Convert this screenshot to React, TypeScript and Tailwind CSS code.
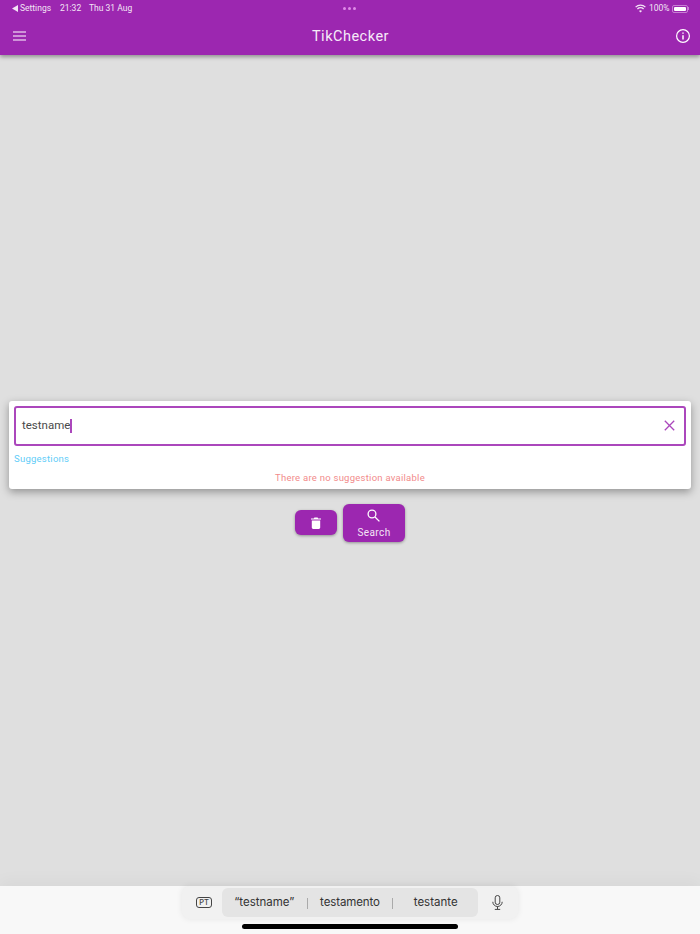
const font = "[font-family:Roboto,'Liberation_Sans',sans-serif]";

function StatusBar() {
  return (
    <div className="relative flex h-[16px] items-center justify-between pl-[12px] pr-[11px] pt-[1px] text-[8.5px] leading-none tracking-[0px] text-[#f3e5f5] [font-family:Roboto,sans-serif]">
      <div className="flex items-center">
        <svg width="6" height="7" viewBox="0 0 6 7" fill="currentColor" className="mr-[2px]">
          <path d="M0 3.5 6 0v7z" />
        </svg>
        <span className="w-[32px]">Settings</span>
        <span className="ml-[8px] w-[22px]">21:32</span>
        <span className="ml-[7px]">Thu 31 Aug</span>
      </div>
      <div className="absolute left-[343px] top-[7px] flex gap-[2px]">
        <span className="h-[3px] w-[3px] rounded-full bg-[#e08be8]" />
        <span className="h-[3px] w-[3px] rounded-full bg-[#e08be8]" />
        <span className="h-[3px] w-[3px] rounded-full bg-[#e08be8]" />
      </div>
      <div className="flex items-center">
        <svg width="11" height="9" viewBox="0 0 11 9" fill="none" stroke="currentColor" strokeWidth="1.3" className="mr-[3px]">
          <path d="M.6 3.1a7 7 0 0 1 9.8 0" />
          <path d="M2.4 5a4.4 4.4 0 0 1 6.2 0" />
          <path d="M5.5 8.6 4 6.9a2.2 2.2 0 0 1 3 0z" fill="currentColor" stroke="none" />
        </svg>
        <span>100%</span>
        <div className="ml-[2px] flex items-center">
          <div className="flex h-[8px] w-[16px] items-center rounded-[2px] border border-[#c77fd4] p-[1px]">
            <div className="h-full w-full rounded-[1px] bg-white" />
          </div>
          <div className="ml-[0.5px] h-[3px] w-[1px] bg-[#c77fd4]" />
        </div>
      </div>
    </div>
  );
}

function AppBar() {
  return (
    <header className="z-10 h-[55px] shrink-0 bg-[#9c27b0] shadow-[0_2px_4px_rgba(0,0,0,0.35)]">
      <StatusBar />
      <div className="flex h-[39px] items-center justify-between pl-[13px] pr-[9px]">
        <svg width="13" height="10" viewBox="0 0 13 10" fill="none" stroke="white" strokeWidth="1.2">
          <path d="M0 1h13M0 5h13M0 9h13" />
        </svg>
        <h1 className="mt-[2px] text-[14.5px] font-normal tracking-[0.5px] text-[#f6ebf8]">TikChecker</h1>
        <svg width="16" height="16" viewBox="0 0 16 16" fill="none" stroke="white" strokeWidth="1.2">
          <circle cx="8" cy="8" r="6.4" />
          <path d="M8 7.2v4.2" strokeWidth="1.5" />
          <path d="M8 4.4v1.4" strokeWidth="1.5" />
        </svg>
      </div>
    </header>
  );
}

function SearchCard() {
  return (
    <div className="w-[682px] rounded-[3px] bg-white px-[5px] pt-[5px] shadow-[0_3px_8px_rgba(0,0,0,0.35)]">
      <div className="flex h-[40px] items-center justify-between rounded-[3px] border-2 border-[#ab47bc] pl-[6px] pr-[9px]">
        <div className="flex items-center text-[11.5px] text-[#4a4a4a]">
          testname
          <span className="h-[14px] w-[1.5px] bg-[#ab47bc]" />
        </div>
        <svg width="11" height="11" viewBox="0 0 11 11" fill="none" stroke="#ab47bc" strokeWidth="1.3">
          <path d="M.8.8l9.4 9.4M10.2.8.8 10.2" />
        </svg>
      </div>
      <p className="mt-[6px] text-[9.5px] leading-[14px] tracking-[0.25px] text-[#5fcdf8]">Suggestions</p>
      <p className="mt-[5px] pb-[4px] text-center text-[9.5px] leading-[14px] tracking-[0.25px] text-[#f28b8b]">
        There are no suggestion available
      </p>
    </div>
  );
}

function Buttons() {
  return (
    <div className="mt-[15px] flex items-center gap-[6px]">
      <button className="flex h-[25px] w-[42px] items-center justify-center rounded-[6px] bg-[#9c27b0] shadow-[0_1px_3px_rgba(0,0,0,0.35)]">
        <svg width="10" height="12" viewBox="0 0 10 12" fill="white">
          <path d="M0 1.4h2.8L3.4.6h3.2l.6.8H10v1.2H0zM.8 3.4h8.4v7.2c0 .8-.6 1.4-1.4 1.4H2.2C1.4 12 .8 11.4.8 10.6z" />
        </svg>
      </button>
      <button className="flex h-[38px] w-[62px] flex-col items-center justify-start rounded-[6px] bg-[#9c27b0] pt-[5px] text-[#f3e5f5] shadow-[0_1px_3px_rgba(0,0,0,0.35)]">
        <svg width="13" height="13" viewBox="0 0 13 13" fill="none" stroke="white" strokeWidth="1.3" className="-ml-[1px] mb-[5px]">
          <circle cx="5" cy="5" r="3.9" />
          <path d="M8 8l4.4 4.4" />
        </svg>
        <span className="text-[10px] font-normal leading-[12px] tracking-[0.4px]">Search</span>
      </button>
    </div>
  );
}

function Keyboard() {
  return (
    <footer className="relative flex h-[48px] shrink-0 justify-center bg-[#f8f8f8] shadow-[0_-6px_14px_rgba(0,0,0,0.03)] [font-family:Inter,sans-serif]">
      <div className="flex h-[33px] w-[336px] items-center rounded-[8px] bg-[#f1f1f1] shadow-[0_0_6px_rgba(0,0,0,0.08)]">
        <div className="flex w-[40px] justify-end pr-[10px]">
          <span className="flex h-[11px] w-[16px] items-center justify-center rounded-[3px] border-[1.5px] border-[#444] text-[7.5px] font-medium leading-none text-[#444]">
            PT
          </span>
        </div>
        <div className="flex h-[29px] w-[256px] items-center rounded-[6px] bg-[#e4e4e4] pt-[1px] text-[11.5px] text-[#333]">
          <span className="flex-[85] text-center">“testname”</span>
          <span className="h-[11px] w-[1px] bg-[#aaa]" />
          <span className="flex-[85] text-center tracking-[-0.1px]">testamento</span>
          <span className="h-[11px] w-[1px] bg-[#aaa]" />
          <span className="flex-[85] text-center">testante</span>
        </div>
        <div className="flex flex-1 justify-center pr-[2px]">
          <svg width="11" height="15" viewBox="0 0 11 15" fill="none" stroke="#444" strokeWidth="1">
            <rect x="3.2" y="0.5" width="4.6" height="9" rx="2.3" />
            <path d="M.8 6.8a4.7 4.7 0 0 0 9.4 0M5.5 11.5v2.6M2.8 14.4h5.4" />
          </svg>
        </div>
      </div>
      <div className="absolute bottom-[5px] left-[242px] h-[5px] w-[216px] rounded-full bg-black" />
    </footer>
  );
}

export default function App() {
  return (
    <div className={`flex h-[934px] w-[700px] flex-col overflow-hidden bg-[#dfdfdf] ${font}`}>
      <AppBar />
      <main className="flex flex-1 flex-col items-center justify-center pt-[1px]">
        <SearchCard />
        <Buttons />
      </main>
      <Keyboard />
    </div>
  );
}
